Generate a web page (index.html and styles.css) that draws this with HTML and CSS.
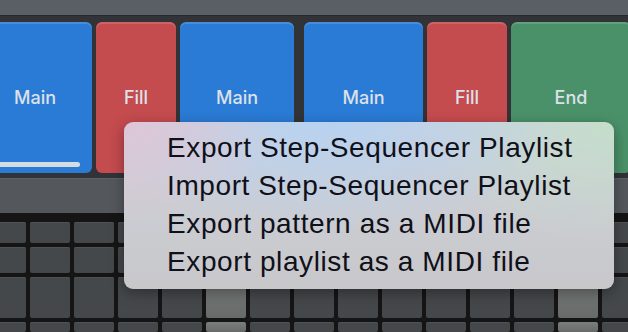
FILE: index.html
```html
<!DOCTYPE html>
<html lang="en">
  <head>
    <meta charset="UTF-8" />
    <meta name="viewport" content="width=device-width, initial-scale=1.0" />
    <title>Step Sequencer</title>
    <link rel="stylesheet" href="styles.css">
  </head>
  <body>
    <div id="top-bar"></div>

    <!-- Pattern pads -->
    <div id="pads">
      <div class="pad main">Main<span class="progress"></span></div>
      <div class="pad fill">Fill</div>
      <div class="pad main">Main</div>
      <div class="pad main split">Main</div>
      <div class="pad fill">Fill</div>
      <div class="pad end">End</div>
    </div>

    <div id="tool-strip"></div>

    <!-- Step grid -->
    <div id="steps">
      <div class="step"></div><div class="step"></div><div class="step"></div><div class="step"></div><div class="step"></div>
      <div class="step"></div><div class="step"></div><div class="step"></div><div class="step"></div><div class="step"></div>
      <div class="step"></div><div class="step"></div><div class="step"></div><div class="step"></div><div class="step"></div>

      <div class="step"></div><div class="step"></div><div class="step"></div><div class="step"></div><div class="step"></div>
      <div class="step"></div><div class="step"></div><div class="step"></div><div class="step"></div><div class="step"></div>
      <div class="step"></div><div class="step"></div><div class="step"></div><div class="step"></div><div class="step"></div>

      <div class="step"></div><div class="step"></div><div class="step"></div><div class="step"></div><div class="step"></div>
      <div class="step on"></div><div class="step"></div><div class="step"></div><div class="step"></div><div class="step"></div>
      <div class="step"></div><div class="step"></div><div class="step"></div><div class="step on"></div><div class="step"></div>

      <div class="step"></div><div class="step"></div><div class="step"></div><div class="step"></div><div class="step"></div>
      <div class="step on"></div><div class="step"></div><div class="step"></div><div class="step"></div><div class="step"></div>
      <div class="step"></div><div class="step"></div><div class="step"></div><div class="step on"></div><div class="step"></div>
    </div>

    <!-- Context menu -->
    <ul id="menu">
      <li>Export Step-Sequencer Playlist</li>
      <li>Import Step-Sequencer Playlist</li>
      <li>Export pattern as a MIDI file</li>
      <li>Export playlist as a MIDI file</li>
    </ul>
  </body>
</html>
```

FILE: styles.css
```css
body {
  margin: 0;
  height: 100vh;
  overflow: hidden;
  background: #34373a;
  font-family: Inter, "Open Sans", sans-serif;
}

#top-bar {
  height: 15px;
  background: #5a5f65;
  border-bottom: 1px solid #26282a;
}

/* Pads row */
#pads {
  display: flex;
  gap: 4px;
  margin-left: -22px;
  padding: 6px 0 5px;
  background: #313336;
}

.pad {
  position: relative;
  flex: none;
  width: 114px;
  height: 151px;
  display: flex;
  align-items: center;
  justify-content: center;
  border-radius: 6px;
  color: #dde1ea;
  font-size: 18px;
  font-weight: 500;
  background: #2a7bd5;
  box-shadow: inset 0 2px 0 rgba(255, 255, 255, 0.14);
}

.pad.fill {
  width: 80px;
  background: #c44b4e;
}

.pad.split {
  width: 119px;
  margin-left: 6px;
}

.pad.end {
  width: 120px;
  background: #4a9169;
}

.progress {
  position: absolute;
  left: 0;
  bottom: 6px;
  width: 102px;
  height: 5px;
  border-radius: 3px;
  background: #d5dde3;
}

#tool-strip {
  height: 34px;
  background: #54585d;
  border-top: 1px solid #5e6267;
  border-bottom: 9px solid #151515;
}

/* Steps */
#steps {
  display: grid;
  grid-template-columns: repeat(15, 40px);
  grid-template-rows: 21px 26px 41px 10px;
  gap: 4px;
  margin-left: -14px;
  background: #151515;
}

.step {
  background: #45484a;
  border-radius: 2px;
  box-shadow: inset 0 1px 0 #4f5254;
}

.step.on {
  background: linear-gradient(#7a7e7d, #666a69);
  box-shadow: none;
}

/* Menu (vibrancy faked with tinted gradients) */
#menu {
  position: absolute;
  left: 124px;
  top: 122px;
  width: 490px;
  height: 167px;
  box-sizing: border-box;
  margin: 0;
  padding: 7px 0 0 43px;
  list-style: none;
  border-radius: 9px;
  background:
    radial-gradient(ellipse 150px 100px at 0% 0%, rgba(224, 196, 214, 0.9), transparent),
    radial-gradient(ellipse 240px 110px at 42% 0%, rgba(182, 210, 242, 0.95), transparent),
    radial-gradient(ellipse 200px 120px at 100% 0%, rgba(196, 222, 202, 0.95), transparent),
    linear-gradient(#cfd2da, #c8c8cb);
  box-shadow: 0 4px 14px rgba(0, 0, 0, 0.35);
  font-family: "Liberation Sans", Arial, sans-serif;
  font-size: 28px;
  letter-spacing: 0.6px;
  line-height: 38px;
  color: #101018;
}
```
